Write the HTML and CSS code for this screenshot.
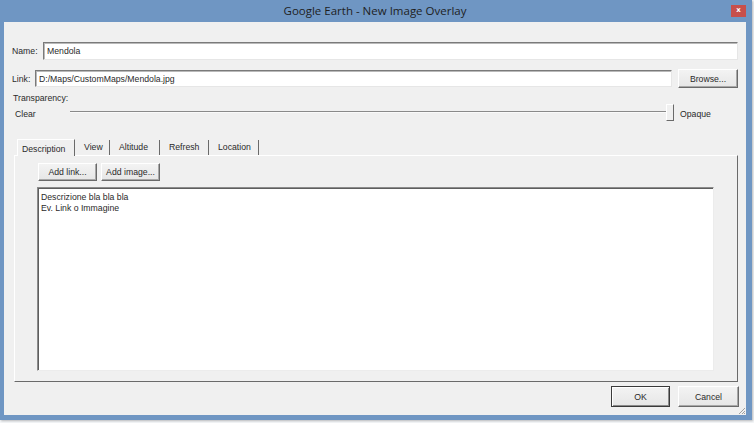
FILE: index.html
```html
<!DOCTYPE html>
<html>
<head>
<meta charset="utf-8">
<link rel="stylesheet" href="styles.css">
</head>
<body>
<div class="window">
  <div class="titlebar">
    <span class="title">Google Earth - New Image Overlay</span>
    <span class="close">x</span>
  </div>
  <div class="client">
    <div class="row name-row">
      <span class="lbl lbl-name">Name:</span>
      <div class="field field-name">Mendola</div>
    </div>
    <div class="row link-row">
      <span class="lbl lbl-link">Link:</span>
      <div class="field field-link">D:/Maps/CustomMaps/Mendola.jpg</div>
      <div class="btn btn-browse">Browse...</div>
    </div>
    <div class="transp">Transparency:</div>
    <div class="slider-row">
      <span class="clear">Clear</span>
      <div class="track"><div class="line"></div><div class="thumb"></div></div>
      <span class="opaque">Opaque</span>
    </div>
    <div class="tabs">
      <div class="tab tab-sel tab-desc">Description</div>
      <div class="tab tab-view">View</div>
      <div class="tab tab-alt">Altitude</div>
      <div class="tab tab-ref">Refresh</div>
      <div class="tab tab-loc">Location</div>
    </div>
    <div class="panel">
      <div class="panel-btns">
        <div class="btn btn-add">Add link...</div>
        <div class="btn btn-add">Add image...</div>
      </div>
      <div class="textarea">Descrizione bla bla bla<br>Ev. Link o Immagine</div>
    </div>
    <div class="footer">
      <div class="btn btn-ok">OK</div>
      <div class="btn btn-cancel">Cancel</div>
    </div>
    <svg class="grip" width="8" height="8" viewBox="0 0 8 8">
      <path d="M7 1 L1 7 M7 4 L4 7 M7 6 L6 7" stroke="#a0a0a0" stroke-width="1" fill="none"/>
    </svg>
  </div>
</div>
</body>
</html>
```
FILE: styles.css
```css
html, body {
  margin: 0;
  padding: 0;
}
body {
  width: 754px;
  height: 423px;
  overflow: hidden;
  background: #f4f6f8;
  font-family: "Liberation Sans", Arial, sans-serif;
}
.window {
  width: 752px;
  height: 420px;
  box-sizing: border-box;
  padding: 0 6px 5px 4px;
  background: #6f96c3;
  display: flex;
  flex-direction: column;
  box-shadow: 1px 1px 2px rgba(0,0,0,0.25);
}
.titlebar {
  height: 22px;
  position: relative;
  display: flex;
  align-items: center;
  justify-content: center;
}
.title {
  font-family: "Open Sans", "Noto Sans", sans-serif;
  font-size: 11.5px;
  color: #1e1e1e;
  margin-top: -1px;
}
.close {
  position: absolute;
  right: 0;
  top: 5px;
  width: 15px;
  height: 12px;
  background: #c74f4b;
  color: #fff;
  font-family: "DejaVu Sans", sans-serif;
  font-weight: bold;
  font-size: 7px;
  line-height: 11px;
  text-align: center;
}
.client {
  flex: 1;
  background: #f0f0f0;
  padding: 20px 8px 0 8px;
  display: flex;
  flex-direction: column;
  position: relative;
  font-size: 8.7px;
  color: #2a2a2a;
}
.row {
  display: flex;
  align-items: center;
}
.name-row {
  height: 18px;
}
.link-row {
  height: 19px;
  margin-top: 9px;
}
.lbl-name {
  width: 31px;
}
.lbl-link {
  width: 23px;
}
.field {
  flex: 1;
  background: #fff;
  box-sizing: border-box;
  border-style: solid;
  border-width: 1px;
  border-color: #7a7a7a #e6e6e6 #e6e6e6 #7a7a7a;
  box-shadow: inset 1px 1px 0 #b9b9b9;
  padding-left: 3px;
  display: flex;
  align-items: center;
}
.field-name {
  height: 18px;
}
.field-link {
  height: 17px;
}
.btn {
  box-sizing: border-box;
  background: linear-gradient(#f3f3f3, #e6e6e6);
  border: 1px solid;
  border-color: #ffffff #6a6a6a #6a6a6a #ffffff;
  box-shadow: inset -1px -1px 0 #a8a8a8;
  display: flex;
  align-items: center;
  justify-content: center;
  color: #2a2a2a;
}
.btn-browse {
  width: 60px;
  height: 19px;
  margin-left: 6px;
}
.transp {
  margin-top: 5px;
  height: 11px;
  line-height: 11px;
  padding-left: 1px;
}
.slider-row {
  height: 17px;
  display: flex;
  align-items: center;
}
.clear {
  width: 55px;
  padding-left: 3px;
  padding-top: 2px;
}
.track {
  width: 604px;
  height: 17px;
  display: flex;
  align-items: center;
}
.line {
  flex: 1;
  height: 0;
  border-top: 1px solid #8a8a8a;
  border-bottom: 1px solid #fafafa;
  margin-top: -2px;
}
.thumb {
  width: 8px;
  height: 17px;
  box-sizing: border-box;
  border: 1px solid;
  border-color: #ffffff #6a6a6a #6a6a6a #ffffff;
  background: #f0f0f0;
}
.opaque {
  margin-left: 6px;
  padding-top: 2px;
}
.tabs {
  margin-top: 17px;
  height: 17px;
  display: flex;
  padding-left: 5px;
  align-items: flex-end;
}
.tab {
  box-sizing: border-box;
  height: 15px;
  line-height: 15px;
  padding-left: 9px;
  border-right: 1px solid #6a6a6a;
  white-space: nowrap;
}
.tab-sel {
  height: 17px;
  line-height: 18px;
  padding-left: 4px;
  border-left: 1px solid #fff;
  border-top: 1px solid #fff;
  position: relative;
  top: 1px;
  background: #f0f0f0;
}
.tab-desc { width: 58px; }
.tab-view { width: 35px; }
.tab-alt { width: 50px; }
.tab-ref { width: 49px; }
.tab-loc { width: 50px; }
.panel {
  margin-left: 2px;
  height: 227px;
  box-sizing: border-box;
  border: 1px solid;
  border-color: #ffffff #6a6a6a #6a6a6a #ffffff;
  padding: 7px 23px 0 22px;
  display: flex;
  flex-direction: column;
}
.panel-btns {
  display: flex;
  gap: 4px;
  margin-left: 1px;
}
.btn-add {
  width: 59px;
  height: 18px;
}
.textarea {
  margin-top: 6px;
  height: 184px;
  box-sizing: border-box;
  background: #fff;
  border: 1px solid;
  border-color: #8c8c8c #ececec #ececec #8c8c8c;
  box-shadow: inset 1px 1px 0 #5e5e5e;
  padding: 4px 0 0 3px;
  line-height: 10.5px;
  color: #2a2a2a;
}
.footer {
  margin-top: 4px;
  height: 21px;
  display: flex;
  justify-content: flex-end;
  gap: 8px;
  margin-right: -1px;
}
.btn-ok {
  width: 59px;
  height: 21px;
  border: 1px solid #3a3a3a;
  box-shadow: inset 1px 1px 0 #fff, inset -1px -1px 0 #8a8a8a;
}
.btn-cancel {
  width: 61px;
  height: 21px;
}
.grip {
  position: absolute;
  right: 0;
  bottom: 0;
}
```
